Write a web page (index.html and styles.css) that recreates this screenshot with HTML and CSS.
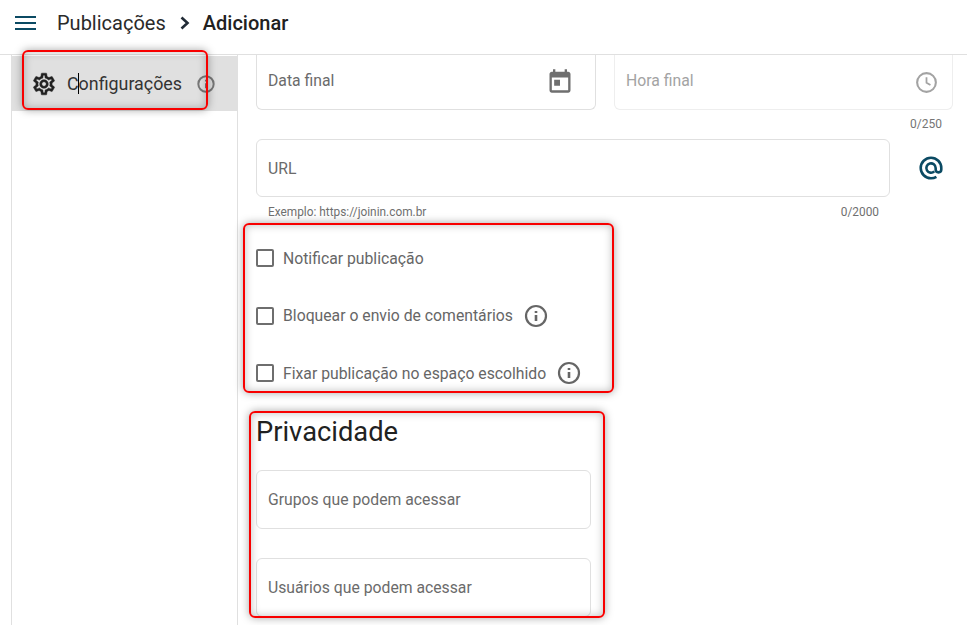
FILE: index.html
```html
<!DOCTYPE html>
<html lang="pt">
<head>
<meta charset="utf-8">
<title>Publicações</title>
<link rel="stylesheet" href="styles.css">
</head>
<body>
<header class="topbar">
  <svg class="menu-icon" width="22" height="14" viewBox="0 0 22 14"><path d="M0 1h21M0 7h21M0 13h21" stroke="#0b4a63" stroke-width="2" fill="none"/></svg>
  <span class="crumb">Publicações</span>
  <svg class="chevron" width="10" height="14" viewBox="0 0 10 14"><path d="M1.5 1.5 7.5 7 1.5 12.5" stroke="#212b36" stroke-width="2.6" fill="none"/></svg>
  <strong class="crumb-current">Adicionar</strong>
</header>
<div class="layout">
  <aside class="sidebar">
    <div class="side-item">
      <svg class="gear" width="26" height="26" viewBox="0 0 24 24"><path fill="#212121" stroke="#212121" stroke-width=".45" d="M19.43 12.98c.04-.32.07-.64.07-.98 0-.34-.03-.66-.07-.98l2.11-1.65c.19-.15.24-.42.12-.64l-2-3.46c-.09-.16-.26-.25-.44-.25-.06 0-.12.01-.17.03l-2.49 1c-.52-.4-1.08-.73-1.69-.98l-.38-2.65C14.46 2.18 14.25 2 14 2h-4c-.25 0-.46.18-.49.42l-.38 2.65c-.61.25-1.17.59-1.69.98l-2.49-1c-.06-.02-.12-.03-.18-.03-.17 0-.34.09-.43.25l-2 3.46c-.13.22-.07.49.12.64l2.11 1.65c-.04.32-.07.65-.07.98 0 .33.03.66.07.98l-2.11 1.65c-.19.15-.24.42-.12.64l2 3.46c.09.16.26.25.44.25.06 0 .12-.01.17-.03l2.49-1c.52.4 1.08.73 1.69.98l.38 2.65c.03.24.24.42.49.42h4c.25 0 .46-.18.49-.42l.38-2.65c.61-.25 1.17-.59 1.69-.98l2.49 1c.06.02.12.03.18.03.17 0 .34-.09.43-.25l2-3.46c.12-.22.07-.49-.12-.64l-2.11-1.65zm-1.98-1.71c.04.31.05.52.05.73 0 .21-.02.43-.05.73l-.14 1.13.89.7 1.08.84-.7 1.21-1.27-.51-1.04-.42-.9.68c-.43.32-.84.56-1.25.73l-1.06.43-.16 1.13-.2 1.35h-1.4l-.19-1.35-.16-1.13-1.06-.43c-.43-.18-.83-.41-1.23-.71l-.91-.7-1.06.43-1.27.51-.7-1.21 1.08-.84.89-.7-.14-1.13c-.03-.31-.05-.54-.05-.74s.02-.43.05-.73l.14-1.13-.89-.7-1.08-.84.7-1.21 1.27.51 1.04.42.9-.68c.43-.32.84-.56 1.25-.73l1.06-.43.16-1.13.2-1.35h1.39l.19 1.35.16 1.13 1.06.43c.43.18.83.41 1.23.71l.91.7 1.06-.43 1.27-.51.7 1.21-1.07.85-.89.7.14 1.13zM12 8c-2.21 0-4 1.79-4 4s1.79 4 4 4 4-1.79 4-4-1.79-4-4-4zm0 6c-1.1 0-2-.9-2-2s.9-2 2-2 2 .9 2 2-.9 2-2 2z"/></svg>
      <span class="side-label">Configurações<i class="caret"></i></span>
      <svg class="info info-faint" width="20" height="20" viewBox="0 0 24 24"><circle cx="12" cy="12" r="9.2" fill="none" stroke="#777" stroke-width="2.4"/><path d="M12 11v6M12 7v2" stroke="#777" stroke-width="2.4" fill="none"/></svg>
    </div>
  </aside>
  <main class="content">
    <div class="date-row">
      <div class="field field-cut field-date">
        <span class="placeholder">Data final</span>
        <svg width="28" height="28" viewBox="0 0 24 24"><path fill="#6f6f6f" d="M19 4h-1V2h-2v2H8V2H6v2H5c-1.1 0-2 .9-2 2v14c0 1.1.9 2 2 2h14c1.1 0 2-.9 2-2V6c0-1.1-.9-2-2-2zm0 16H5V9h14v11zM7 11h5v5H7z"/></svg>
      </div>
      <div class="field field-cut field-time">
        <span class="placeholder placeholder-off">Hora final</span>
        <svg class="clock" width="25" height="25" viewBox="0 0 24 24"><circle cx="12" cy="12" r="9" fill="none" stroke="#a3a3a3" stroke-width="2"/><path d="M12 7v5.3l3.8 2.2" fill="none" stroke="#a3a3a3" stroke-width="1.7"/></svg>
      </div>
    </div>
    <div class="count-row">0/250</div>
    <div class="url-row">
      <div class="field field-url"><span class="placeholder">URL</span></div>
      <svg class="at" width="26" height="26" viewBox="0 0 24 24"><path fill="none" stroke="#0b4a63" stroke-width="2.4" d="M17 20.2A10 10 0 0 1 12 21.5a9.5 9.5 0 1 1 9.5-9.5v1.4a2.6 2.6 0 0 1-5.2 0V12a4.3 4.3 0 1 0-1.3 3.1"/></svg>
    </div>
    <div class="hint-row"><span>Exemplo: https://joinin.com.br</span><span>0/2000</span></div>
    <div class="checks">
      <label class="check"><i class="box"></i><span>Notificar publicação</span></label>
      <label class="check"><i class="box"></i><span>Bloquear o envio de comentários</span>
        <svg width="24" height="24" viewBox="0 0 24 24"><circle cx="12" cy="12" r="10" fill="none" stroke="#666" stroke-width="2.2"/><path d="M12 11v6M12 7v2" stroke="#666" stroke-width="2.6" fill="none"/></svg></label>
      <label class="check"><i class="box"></i><span>Fixar publicação no espaço escolhido</span>
        <svg width="24" height="24" viewBox="0 0 24 24"><circle cx="12" cy="12" r="10" fill="none" stroke="#666" stroke-width="2.2"/><path d="M12 11v6M12 7v2" stroke="#666" stroke-width="2.6" fill="none"/></svg></label>
    </div>
    <h2 class="section-title">Privacidade</h2>
    <div class="field field-wide"><span class="placeholder">Grupos que podem acessar</span></div>
    <div class="field field-wide"><span class="placeholder">Usuários que podem acessar</span></div>
  </main>
</div>
<div class="mark mark-a"></div>
<div class="mark mark-b"></div>
<div class="mark mark-c"></div>
</body>
</html>
```
FILE: styles.css
```css
* { box-sizing: border-box; }
html, body { height: 100%; }
body {
  margin: 0;
  height: 625px;
  overflow: hidden;
  background: #fff;
  color: #212121;
  font-family: Roboto, "Liberation Sans", sans-serif;
}
.topbar {
  height: 55px;
  display: flex;
  align-items: center;
  padding: 0 0 9px 15px;
  border-bottom: 1px solid #e0e0e0;
}
.menu-icon { margin-right: 20px; }
.crumb { font-size: 20px; color: #2a2a2a; }
.chevron { margin: 0 13px 0 14px; }
.crumb-current { font-size: 20px; font-weight: 500; color: #212121; }
.layout {
  display: flex;
  height: 570px;
  padding-left: 11px;
}
.sidebar {
  width: 227px;
  flex: none;
  padding-top: 1px;
  border-left: 1px solid #e0e0e0;
  border-right: 1px solid #e0e0e0;
}
.side-item {
  height: 55px;
  display: flex;
  align-items: center;
  padding-left: 19px;
  background: #e0e0e0;
}
.side-label {
  position: relative;
  margin-left: 10px;
  font-size: 17.85px;
  color: #333;
}
.caret {
  position: absolute;
  left: 11px;
  top: 0;
  width: 1px;
  height: 21px;
  background: #000;
}
.info-faint { margin-left: 14px; margin-top: 1px; }
.content {
  flex: 1;
  padding-left: 18px;
  min-width: 0;
}
.field {
  display: flex;
  align-items: center;
  justify-content: space-between;
  border: 1px solid #e0e0e0;
  border-radius: 6px;
  background: #fff;
  padding: 0 11px;
}
.placeholder { font-size: 15.75px; color: #6b6b6b; }
.placeholder-off { color: #a3a3a3; }
.date-row { display: flex; gap: 18px; }
.field-cut {
  height: 55px;
  border-top: 0;
  border-radius: 0 0 6px 6px;
}
.field-date { width: 340px; padding-right: 21px; padding-bottom: 4px; }
.field-date svg { margin-top: 2px; }
.field-time { width: 339px; border-color: #eeeeee; padding-right: 13px; padding-bottom: 4px; }
.clock { margin-top: 4px; }
.count-row {
  width: 686px;
  height: 29px;
  padding-top: 7px;
  text-align: right;
  font-size: 12px;
  line-height: 14px;
  color: #757575;
}
.url-row { display: flex; align-items: center; }
.field-url { width: 634px; height: 58px; }
.at { margin-left: 28px; }
.hint-row {
  width: 623px;
  display: flex;
  justify-content: space-between;
  padding: 8px 0 0 12px;
  font-size: 11.85px;
  line-height: 14px;
  color: #6f6f6f;
}
.checks {
  display: flex;
  flex-direction: column;
  gap: 33.5px;
  padding-top: 27px;
}
.check {
  display: flex;
  align-items: center;
  height: 24px;
  font-size: 15.75px;
  color: #666;
}
.box {
  width: 18px;
  height: 18px;
  margin-right: 9px;
  border: 2px solid #6e6e6e;
  border-radius: 2px;
}
.check svg { margin-left: 11px; }
.section-title {
  margin: 30px 0 20px;
  font-size: 27.3px;
  line-height: 35px;
  font-weight: 400;
  color: #212121;
}
.field-wide {
  width: 335px;
  height: 59px;
  margin-bottom: 29px;
}
.mark {
  position: absolute;
  border: 2px solid #f80000;
  border-radius: 6px;
  box-shadow: 0 0 9px rgba(0, 0, 0, .35), inset 0 0 9px rgba(0, 0, 0, .25);
}
.mark-a { left: 22px; top: 50px; width: 186px; height: 60px; }
.mark-b { left: 243px; top: 223px; width: 371px; height: 170px; }
.mark-c { left: 249px; top: 411px; width: 356px; height: 207px; }
```
